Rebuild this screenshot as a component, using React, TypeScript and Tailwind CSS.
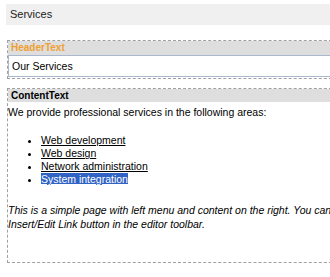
export default function App() {
  return (
    <div className="w-[330px] h-[277px] overflow-hidden bg-white text-black font-['Liberation_Sans',Arial,sans-serif]">
      <div className="ml-[6px] mt-[4px] w-[340px] h-[21px] bg-[#f0f0f0] pl-[4px] text-[11px] leading-[21px] text-[#222]">
        Services
      </div>

      <div className="ml-[7px] mt-[15px] w-[340px] border border-dashed border-[#a0a0a0] pb-[1px]">
        <div className="h-[14px] bg-[#dedede] pl-[3px] text-[10px] leading-[14px] font-bold text-[#f0a030]">
          HeaderText
        </div>
        <div className="h-[22px] border border-[#a9b8cc] pl-[3px] text-[10.5px] leading-[20px]">
          Our Services
        </div>
      </div>

      <div className="ml-[7px] mt-[9px] w-[340px] h-[175px] border border-dashed border-[#a0a0a0]">
        <div className="h-[13px] bg-[#dedede] pl-[3px] text-[10px] leading-[13px] font-bold text-black">
          ContentText
        </div>
        <div className="text-[10.5px] leading-[13px]">
          <p className="mt-[4px]">We provide professional services in the following areas:</p>
          <ul className="mt-[15px] ml-[33px] list-disc">
            <li><span className="underline">Web development</span></li>
            <li><span className="underline">Web design</span></li>
            <li><span className="underline">Network administration</span></li>
            <li>
              <span className="underline bg-[#3163c5] text-white">System integration</span>
            </li>
          </ul>
          <p className="mt-[17px] italic whitespace-nowrap leading-[14px]">
            This is a simple page with left menu and content on the right. You can
            <br />
            Insert/Edit Link button in the editor toolbar.
          </p>
        </div>
      </div>
    </div>
  );
}
